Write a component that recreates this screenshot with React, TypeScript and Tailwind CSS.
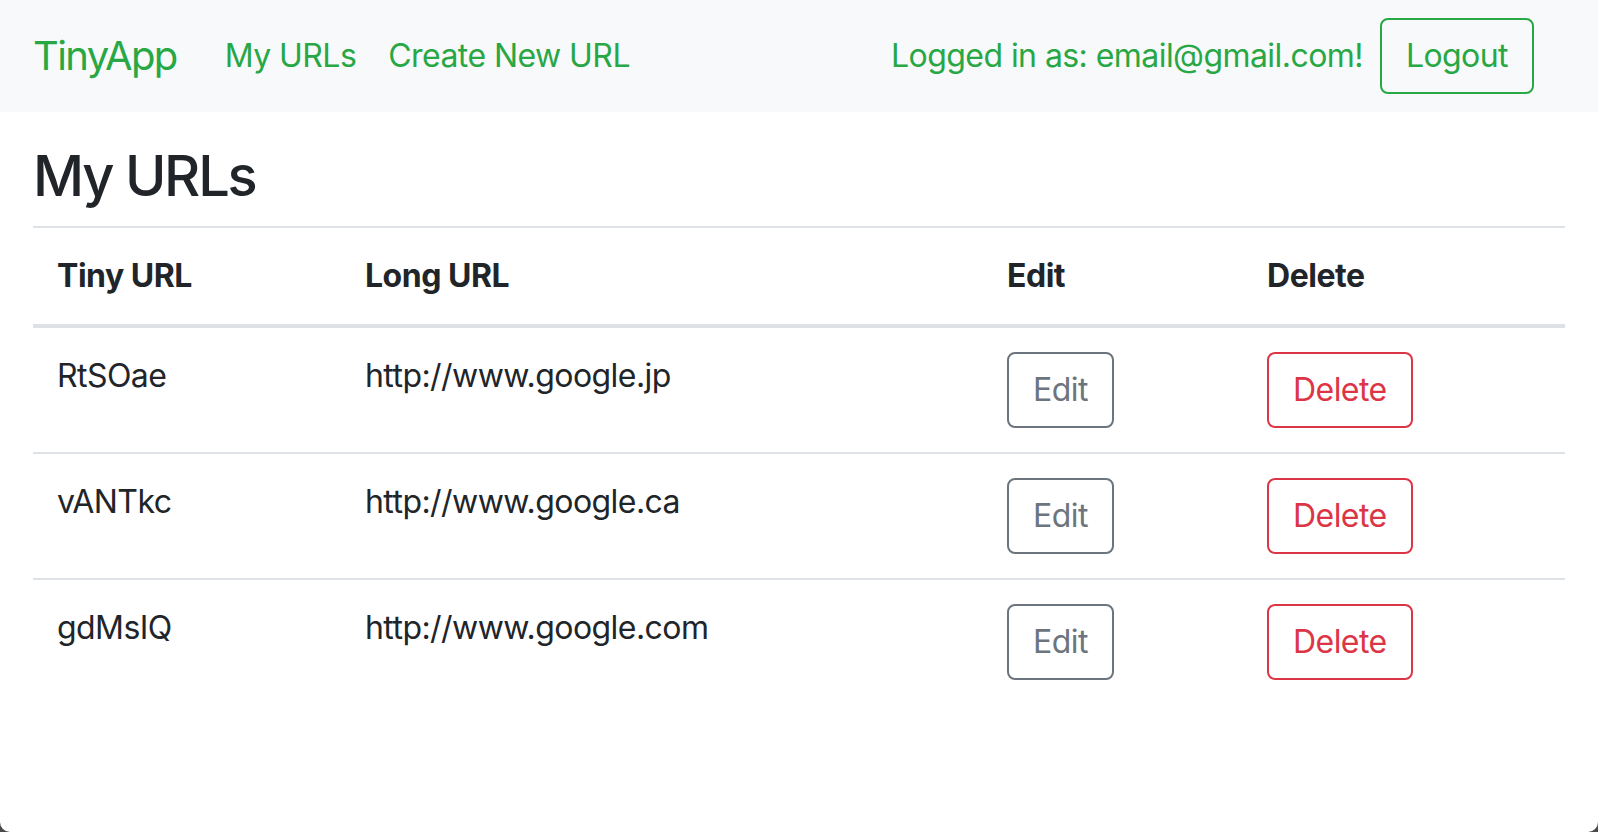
import React from "react";

const rows = [
  { tiny: "RtSOae", long: "http://www.google.jp" },
  { tiny: "vANTkc", long: "http://www.google.ca" },
  { tiny: "gdMsIQ", long: "http://www.google.com" },
];

export default function App() {
  return (
    <div className="h-[832px] w-full bg-[#4a4a4a]" style={{ fontFamily: "Inter, 'Noto Sans', sans-serif" }}>
      <div className="h-full w-full overflow-hidden rounded-b-[10px] bg-white text-[#212529] tracking-[-0.035em]">
        <nav className="flex h-[112px] items-center bg-[#f8f9fa] pl-[33px] pr-[64px]">
          <span className="mr-[32px] text-[40px] leading-[60px] tracking-[-0.04em] text-[#28a745]">TinyApp</span>
          <span className="px-[16px] text-[32px] leading-[48px] text-[#28a745]">My URLs</span>
          <span className="px-[16px] text-[32px] leading-[48px] text-[#28a745]">Create New URL</span>
          <div className="ml-auto flex items-center gap-[17px]">
            <span className="text-[32px] leading-[48px] text-[#28a745]">Logged in as: email@gmail.com!</span>
            <button className="rounded-[8px] border-2 border-[#28a745] px-[24px] py-[12px] text-[32px] leading-[48px] text-[#28a745]">
              Logout
            </button>
          </div>
        </nav>
        <main className="px-[33px] pt-[31px]">
          <h3 className="mb-[16px] text-[56px] font-medium leading-[67px] tracking-[-0.04em]">My URLs</h3>
          <div className="border-t-2 border-[#dee2e6]">
            <div className="grid grid-cols-[308px_642px_260px_1fr] border-b-4 border-[#dee2e6] text-[32px] font-bold leading-[48px] tracking-[-0.015em]">
              <div className="p-[24px]">Tiny URL</div>
              <div className="p-[24px]">Long URL</div>
              <div className="p-[24px]">Edit</div>
              <div className="p-[24px]">Delete</div>
            </div>
            {rows.map((r, i) => (
              <div
                key={r.tiny}
                className={
                  "grid grid-cols-[308px_642px_260px_1fr] text-[32px] leading-[48px] " +
                  (i < rows.length - 1 ? "border-b-2 border-[#dee2e6]" : "")
                }
              >
                <div className="p-[24px]">{r.tiny}</div>
                <div className="p-[24px]">{r.long}</div>
                <div className="p-[24px]">
                  <button className="rounded-[8px] border-2 border-[#6c757d] px-[24px] py-[12px] text-[32px] leading-[48px] text-[#6c757d]">
                    Edit
                  </button>
                </div>
                <div className="p-[24px]">
                  <button className="rounded-[8px] border-2 border-[#dc3545] px-[24px] py-[12px] text-[32px] leading-[48px] text-[#dc3545]">
                    Delete
                  </button>
                </div>
              </div>
            ))}
          </div>
        </main>
      </div>
    </div>
  );
}
